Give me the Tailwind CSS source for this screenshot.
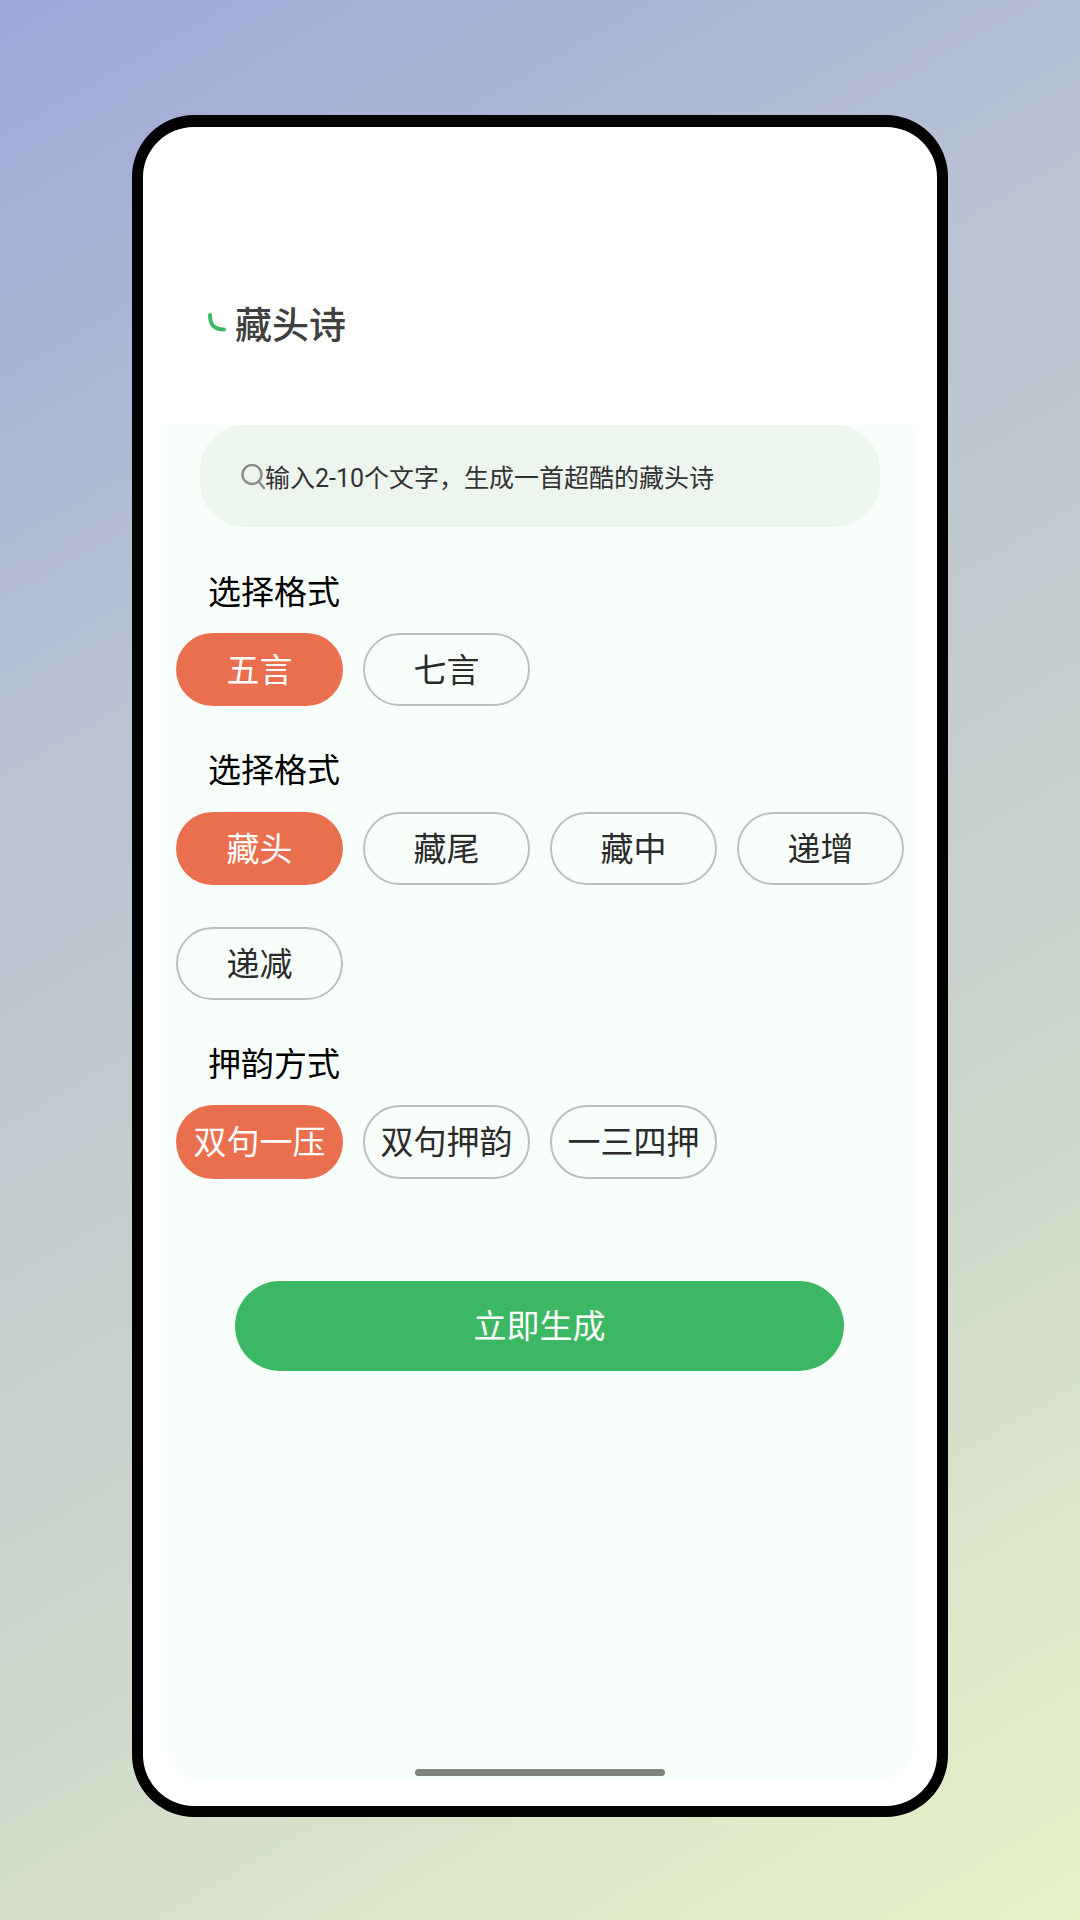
<!DOCTYPE html>
<html lang="zh-CN">
<head>
<meta charset="utf-8">
<script src="https://cdn.jsdelivr.net/npm/@tailwindcss/browser@4"></script>
</head>
<body class="m-0">
<div class="w-[1080px] h-[1920px] overflow-hidden pt-[115px] pl-[132px] bg-[linear-gradient(150deg,#9fa7d8_0%,#b8c2d2_30%,#ccd6cc_65%,#e8f3c8_100%)] font-['Roboto','Noto_Sans_CJK_SC',sans-serif]">
  <div class="relative w-[816px] h-[1702px] border-[11px] border-t-[12px] border-black rounded-[62px] bg-white overflow-hidden">
    <div class="h-[298px] pt-[177px] pl-[65px] flex items-start gap-[9px]">
      <svg class="mt-[9px] w-[18px] h-[20px]" viewBox="0 0 18 20" fill="none"><path d="M2 2 C2 12 6 16.500 16 16.500" stroke="#3cb763" stroke-width="4" stroke-linecap="round"/></svg>
      <span class="text-[37px] leading-[46px] font-medium text-[#404040]">藏头诗</span>
    </div>
    <div class="w-[747px] h-[1356px] ml-[24px] bg-[#f8fffb] rounded-b-[40px]">
      <div class="ml-[33px] w-[680px] h-[102px] rounded-[45px] bg-[#edf5ef] flex items-center pl-[41px]">
        <svg class="mt-[2px] w-[24px] h-[26px] shrink-0" viewBox="0 0 24 26" fill="none"><circle cx="11" cy="10.500" r="9.500" stroke="#8a8f8c" stroke-width="2.500"/><path d="M18 18 L23 24" stroke="#8a8f8c" stroke-width="2.500" stroke-linecap="round"/></svg>
        <span class="text-[25px] leading-[34px] mt-[5px] text-[#333333]">输入2-10个文字，生成一首超酷的藏头诗</span>
      </div>

      <h2 class="mt-[45px] ml-[41px] text-[33px] leading-[42px] font-normal text-black">选择格式</h2>
      <div class="mt-[19px] ml-[9px] w-[735px] flex flex-wrap gap-x-[20px] gap-y-[42px]">
        <div class="w-[167px] h-[73px] pt-[2px] rounded-[37px] bg-[#ea6f4e] text-white text-[33px] flex items-center justify-center">五言</div>
        <div class="w-[167px] h-[73px] pt-[2px] rounded-[37px] border-2 border-[#bcc0bc] text-[#2b2b2b] text-[33px] flex items-center justify-center">七言</div>
      </div>

      <h2 class="mt-[44px] ml-[41px] text-[33px] leading-[42px] font-normal text-black">选择格式</h2>
      <div class="mt-[20px] ml-[9px] w-[735px] flex flex-wrap gap-x-[20px] gap-y-[42px]">
        <div class="w-[167px] h-[73px] pt-[2px] rounded-[37px] bg-[#ea6f4e] text-white text-[33px] flex items-center justify-center">藏头</div>
        <div class="w-[167px] h-[73px] pt-[2px] rounded-[37px] border-2 border-[#bcc0bc] text-[#2b2b2b] text-[33px] flex items-center justify-center">藏尾</div>
        <div class="w-[167px] h-[73px] pt-[2px] rounded-[37px] border-2 border-[#bcc0bc] text-[#2b2b2b] text-[33px] flex items-center justify-center">藏中</div>
        <div class="w-[167px] h-[73px] pt-[2px] rounded-[37px] border-2 border-[#bcc0bc] text-[#2b2b2b] text-[33px] flex items-center justify-center">递增</div>
        <div class="w-[167px] h-[73px] pt-[2px] rounded-[37px] border-2 border-[#bcc0bc] text-[#2b2b2b] text-[33px] flex items-center justify-center">递减</div>
      </div>

      <h2 class="mt-[44px] ml-[41px] text-[33px] leading-[42px] font-normal text-black">押韵方式</h2>
      <div class="mt-[19px] ml-[9px] w-[735px] flex flex-wrap gap-x-[20px] gap-y-[42px]">
        <div class="w-[167px] h-[74px] pt-[2px] rounded-[37px] bg-[#ea6f4e] text-white text-[33px] flex items-center justify-center">双句一压</div>
        <div class="w-[167px] h-[74px] pt-[2px] rounded-[37px] border-2 border-[#bcc0bc] text-[#2b2b2b] text-[33px] flex items-center justify-center">双句押韵</div>
        <div class="w-[167px] h-[74px] pt-[2px] rounded-[37px] border-2 border-[#bcc0bc] text-[#2b2b2b] text-[33px] flex items-center justify-center">一三四押</div>
      </div>

      <div class="mt-[102px] ml-[68px] w-[609px] h-[90px] pt-[1px] rounded-[45px] bg-[#3cb763] text-white text-[33px] flex items-center justify-center">立即生成</div>
    </div>
    <div class="absolute left-[272px] top-[1642px] w-[250px] h-[7px] rounded-full bg-[#7d827d]"></div>
  </div>
</div>
</body>
</html>
